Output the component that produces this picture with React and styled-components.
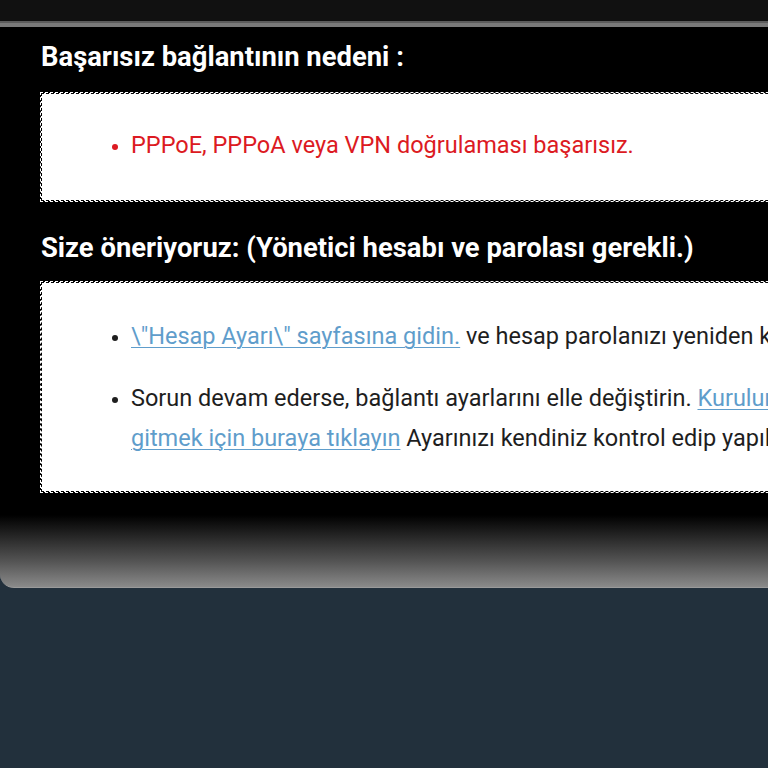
import React from "react";
import styled, { createGlobalStyle } from "styled-components";

const Global = createGlobalStyle`
  html, body {
    margin: 0;
    padding: 0;
    background: #22303c;
    overflow: hidden;
    font-family: Roboto, "Noto Sans", "Liberation Sans", sans-serif;
  }
  #root { width: 768px; overflow: hidden; }
`;

const Shell = styled.div`
  width: 1000px;
  display: flex;
  flex-direction: column;
`;

const TopBar = styled.div`
  height: 23px;
  background: #111111;
  border-bottom: 4px solid #7a7a7a;
  box-shadow: inset 0 -2px 0 #5c5c5c;
`;

const Panel = styled.div`
  background: #000;
  padding: 13px 0 23px 41px;
  display: flex;
  flex-direction: column;
`;

const Heading = styled.h2`
  margin: 0;
  color: #fff;
  font-size: 27.4px;
  font-weight: 700;
  line-height: 34px;
  height: 34px;
  white-space: nowrap;
  margin-bottom: ${(p) => p.$gap}px;
`;

const Box = styled.div`
  background: #fff;
  border: 1px dashed #000;
  outline: 1px dashed #fff;
  padding: ${(p) => (p.$tall ? "33px 0 33px 0" : "31px 0 35px 0")};
  width: 900px;
  margin-bottom: ${(p) => p.$gap || 0}px;
`;

const List = styled.ul`
  margin: 0;
  padding: 0 11px 0 89px;
  display: flex;
  flex-direction: column;
  gap: 22px;
`;

const Item = styled.li`
  font-size: 23.5px;
  line-height: 40px;
  color: ${(p) => (p.$error ? "#dc1a22" : "#1e1e1e")};
  &::marker {
    font-size: 19px;
  }
`;

const Link = styled.a`
  color: #5f9dcb;
  text-decoration: underline;
  text-underline-offset: 3px;
  text-decoration-thickness: 1px;
  cursor: pointer;
`;

const Fade = styled.div`
  height: 72px;
  background: linear-gradient(to bottom, #000 0%, #1c1c1c 22%, #555 65%, #8a8a8a 100%);
  border-bottom: 1px solid #9a9a9a;
  border-bottom-left-radius: 14px;
`;

export default function App() {
  return (
    <>
      <Global />
      <Shell>
        <TopBar />
        <Panel>
          <Heading $gap={19}>Başarısız bağlantının nedeni :</Heading>
          <Box $gap={30}>
            <List>
              <Item $error>PPPoE, PPPoA veya VPN doğrulaması başarısız.</Item>
            </List>
          </Box>
          <Heading $gap={17}>Size öneriyoruz: (Yönetici hesabı ve parolası gerekli.)</Heading>
          <Box $tall>
            <List>
              <Item>
                <Link>\"Hesap Ayarı\" sayfasına gidin.</Link> ve hesap parolanızı yeniden kontrol edin.
              </Item>
              <Item>
                Sorun devam ederse, bağlantı ayarlarını elle değiştirin.{" "}
                <Link>Kurulum sayfasına gitmek için buraya tıklayın</Link> Ayarınızı kendiniz kontrol edip yapılandırın.
              </Item>
            </List>
          </Box>
        </Panel>
        <Fade />
      </Shell>
    </>
  );
}
